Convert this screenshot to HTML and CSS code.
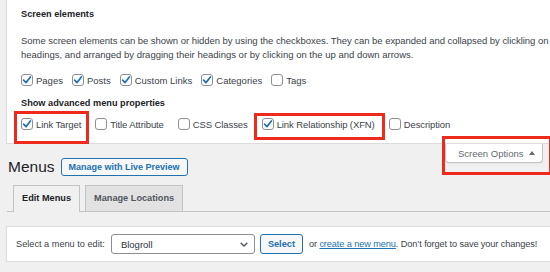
FILE: index.html
```html
<!DOCTYPE html>
<html lang="en">
<head>
<meta charset="utf-8">
<title>Menus</title>
<link rel="stylesheet" href="styles.css">
</head>
<body>
<div class="screen-meta">
  <h5 class="meta-title">Screen elements</h5>
  <p class="meta-desc"><span class="line line-first">Some screen elements can be shown or hidden by using the checkboxes. They can be expanded and collapsed by clickling on</span><span class="line">headings, and arranged by dragging their headings or by clicking on the up and down arrows.</span></p>
  <div class="cb-row row-elements">
    <label class="cb"><span class="box"><svg viewBox="0 0 12 12" width="12" height="12"><path d="M2.6 6.1 L5 8.6 L9.4 3" fill="none" stroke="#2271b1" stroke-width="1.7" stroke-linecap="round" stroke-linejoin="round"/></svg></span>Pages</label>
    <label class="cb"><span class="box"><svg viewBox="0 0 12 12" width="12" height="12"><path d="M2.6 6.1 L5 8.6 L9.4 3" fill="none" stroke="#2271b1" stroke-width="1.7" stroke-linecap="round" stroke-linejoin="round"/></svg></span>Posts</label>
    <label class="cb"><span class="box"><svg viewBox="0 0 12 12" width="12" height="12"><path d="M2.6 6.1 L5 8.6 L9.4 3" fill="none" stroke="#2271b1" stroke-width="1.7" stroke-linecap="round" stroke-linejoin="round"/></svg></span>Custom Links</label>
    <label class="cb"><span class="box"><svg viewBox="0 0 12 12" width="12" height="12"><path d="M2.6 6.1 L5 8.6 L9.4 3" fill="none" stroke="#2271b1" stroke-width="1.7" stroke-linecap="round" stroke-linejoin="round"/></svg></span>Categories</label>
    <label class="cb"><span class="box"></span>Tags</label>
  </div>
  <h5 class="meta-title adv-title">Show advanced menu properties</h5>
  <div class="cb-row row-adv">
    <label class="cb mark-target"><span class="box"><svg viewBox="0 0 12 12" width="12" height="12"><path d="M2.6 6.1 L5 8.6 L9.4 3" fill="none" stroke="#2271b1" stroke-width="1.7" stroke-linecap="round" stroke-linejoin="round"/></svg></span>Link Target</label>
    <label class="cb"><span class="box"></span>Title Attribute</label>
    <label class="cb"><span class="box"></span>CSS Classes</label>
    <label class="cb mark-xfn"><span class="box"><svg viewBox="0 0 12 12" width="12" height="12"><path d="M2.6 6.1 L5 8.6 L9.4 3" fill="none" stroke="#2271b1" stroke-width="1.7" stroke-linecap="round" stroke-linejoin="round"/></svg></span>Link Relationship (XFN)</label>
    <label class="cb"><span class="box"></span>Description</label>
  </div>
</div>

<div class="topbar">
  <div class="heading-row">
    <h1 class="page-title">Menus</h1>
    <a class="btn-outline">Manage with Live Preview</a>
  </div>
  <div class="screen-opts">Screen Options <svg class="arrow" viewBox="0 0 6 4" width="6" height="4"><path d="M0 4 L3 0 L6 4 Z" fill="#646970"/></svg></div>
</div>

<div class="nav-tabs">
  <span class="tab active">Edit Menus</span>
  <span class="tab">Manage Locations</span>
</div>

<div class="manage-menus">
  <span class="sel-label">Select a menu to edit:</span>
  <div class="select">Blogroll<svg class="chev" viewBox="0 0 8 5" width="8" height="5"><path d="M0.7 0.7 L4 4 L7.3 0.7" fill="none" stroke="#50575e" stroke-width="1.3"/></svg></div>
  <a class="btn-outline btn-select">Select</a>
  <span class="after-text">or <a class="link">create a new menu</a>. Don’t forget to save your changes!</span>
</div>
</body>
</html>
```
FILE: styles.css
```css
* { box-sizing: border-box; margin: 0; padding: 0; }
html, body { overflow: hidden; }
body {
  width: 550px;
  height: 272px;
  background: #f0f0f1;
  font-family: "Liberation Sans", Arial, sans-serif;
  font-size: 9.5px;
  color: #3c434a;
}

.screen-meta {
  margin-left: 6px;
  width: 544px;
  height: 144px;
  background: #fff;
  border-left: 1px solid #dcdcde;
  border-bottom: 1px solid #dcdcde;
  padding: 8px 0 0 14px;
}
.meta-title {
  font-size: 9.2px;
  font-weight: bold;
  line-height: 12px;
  color: #1d2327;
}
.meta-desc {
  margin-top: 14px;
  line-height: 14px;
}
.meta-desc .line { display: block; white-space: nowrap; }
.meta-desc .line-first { letter-spacing: -0.04px; }
.cb-row {
  display: flex;
  align-items: center;
  height: 14px;
}
.row-elements { margin-top: 11px; gap: 9px; }
.adv-title { margin-top: 10px; }
.row-adv { margin-top: 8px; gap: 14px; letter-spacing: -0.1px; }
.cb {
  position: relative;
  display: inline-flex;
  align-items: center;
  gap: 3px;
  white-space: nowrap;
}
.box {
  width: 12px;
  height: 12px;
  border: 1px solid #8c8f94;
  border-radius: 3px;
  background: #fff;
  display: flex;
  align-items: center;
  justify-content: center;
  overflow: hidden;
}
.box svg { display: block; flex: none; }

.mark-target::after,
.mark-xfn::after,
.screen-opts::after {
  content: "";
  position: absolute;
  border: 3px solid #ee2a1c;
}
.mark-target::after { left: -7px; top: -7px; width: 69px; height: 27px; }
.mark-xfn::after { left: -8px; top: -5px; width: 125px; height: 21px; }

.topbar {
  display: flex;
  justify-content: space-between;
  align-items: flex-start;
}
.heading-row {
  display: flex;
  align-items: center;
  gap: 6px;
  margin: 14px 0 0 8px;
  height: 18px;
}
.page-title {
  font-size: 15.5px;
  font-weight: normal;
  color: #1d2327;
  line-height: 18px;
}
.btn-outline {
  display: inline-flex;
  align-items: center;
  height: 18px;
  padding: 0 7px;
  border: 1px solid #2271b1;
  border-radius: 3px;
  background: #f6f7f7;
  color: #2271b1;
  font-weight: bold;
  font-size: 9px;
}
.screen-opts {
  position: relative;
  margin-right: 7px;
  height: 19px;
  width: 98px;
  padding: 0 0 0 12px;
  display: flex;
  align-items: center;
  gap: 6px;
  background: #fff;
  border: 1px solid #c3c4c7;
  border-top: none;
  border-radius: 0 0 4px 4px;
  box-shadow: 0 1px 1px rgba(0,0,0,0.04);
  color: #646970;
}
.screen-opts::after { left: -4px; top: -8px; width: 104px; height: 33px; }
.arrow { display: block; }

.nav-tabs {
  margin: 9px 0 0 7px;
  padding-left: 6px;
  border-bottom: 1px solid #c3c4c7;
  display: flex;
  gap: 5px;
  height: 27px;
}
.tab {
  height: 26px;
  line-height: 25px;
  padding: 0 8px;
  border: 1px solid #c3c4c7;
  border-bottom: none;
  background: #e2e2e3;
  font-weight: bold;
  font-size: 9.2px;
  color: #50575e;
}
.tab.active {
  background: #f0f0f1;
  color: #1d2327;
  height: 27px;
}

.manage-menus {
  margin: 14px 0 0 6px;
  width: 544px;
  height: 36px;
  background: #fff;
  border: 1px solid #dcdcde;
  border-right: none;
  padding-left: 9px;
  display: flex;
  align-items: center;
  white-space: nowrap;
  font-size: 9.2px;
}
.select {
  margin-left: 6px;
  width: 144px;
  height: 20px;
  border: 1px solid #8c8f94;
  border-radius: 3px;
  padding: 0 6px 0 9px;
  display: flex;
  align-items: center;
  justify-content: space-between;
  color: #2c3338;
  font-size: 9.5px;
}
.chev { display: block; }
.btn-select {
  margin-left: 5px;
  height: 20px;
  padding: 0 7px;
  font-size: 9.2px;
}
.after-text { margin-left: 6px; letter-spacing: -0.1px; }
.link { color: #2271b1; text-decoration: underline; }
```
